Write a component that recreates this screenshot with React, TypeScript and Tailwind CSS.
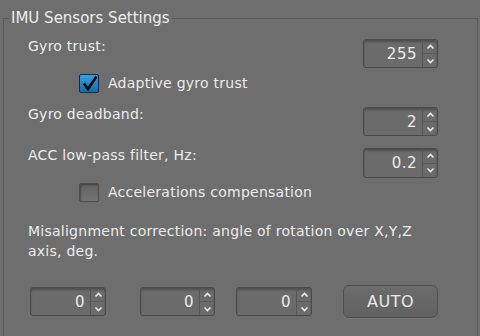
import React from "react";

const Spinner = ({ value, className = "" }: { value: string; className?: string }) => (
  <div
    className={`flex h-[29px] rounded-[3px] border border-[#4a4a4a] bg-[#6b6b6b] shadow-[inset_0_2px_2px_rgba(0,0,0,0.25)] ${className}`}
  >
    <div className="flex flex-1 items-center justify-end pr-[5px] text-[15px] tracking-[0.5px] text-[#ececec]">{value}</div>
    <div className="flex w-[15px] flex-col border-l border-[#555]">
      <div className="flex flex-1 items-center justify-center border-b border-[#5a5a5a]">
        <svg width="9" height="6" viewBox="0 0 9 6">
          <path d="M1.5 4.5 L4.5 1.5 L7.5 4.5" fill="none" stroke="#ededed" strokeWidth="1.6" />
        </svg>
      </div>
      <div className="flex flex-1 items-center justify-center">
        <svg width="9" height="6" viewBox="0 0 9 6">
          <path d="M1.5 1.5 L4.5 4.5 L7.5 1.5" fill="none" stroke="#ededed" strokeWidth="1.6" />
        </svg>
      </div>
    </div>
  </div>
);

const Checkbox = ({ checked }: { checked: boolean }) =>
  checked ? (
    <div className="relative h-[19px] w-[20px] rounded-[2px] border border-[#0b3048] bg-gradient-to-b from-[#3aa0e0] to-[#136aa8]">
      <svg className="absolute left-[2px] top-[0px]" width="16" height="17" viewBox="0 0 16 17">
        <path d="M2 8.5 L6 14 L14.5 1.5" fill="none" stroke="#050505" strokeWidth="2.6" />
      </svg>
    </div>
  ) : (
    <div className="h-[19px] w-[20px] rounded-[2px] border border-[#4c4c4c] bg-gradient-to-b from-[#626262] to-[#747474] shadow-[inset_1px_1px_2px_rgba(0,0,0,0.35)]" />
  );

export default function App() {
  return (
    <div
      className="h-[336px] w-[480px] overflow-hidden bg-[#6e6e6e] text-[14px] leading-[16px] tracking-[0.25px] text-[#ececec]"
      style={{ fontFamily: '"DejaVu Sans", "Liberation Sans", sans-serif' }}
    >
      <fieldset className="ml-[3px] mt-[8px] h-[340px] w-[472px] border border-[#5a5a5a]">
        <legend className="ml-[5px] px-[2px] text-[15px] leading-[20px] tracking-normal text-[#ececec]">
          IMU Sensors Settings
        </legend>
        <div className="pl-[24px] pr-[39px]">
          <div className="mt-[11px] flex h-[29px] items-start justify-between">
            <span className="mt-[-1px]">Gyro trust:</span>
            <Spinner value="255" className="w-[75px]" />
          </div>
          <div className="ml-[51px] mt-[5px] flex h-[20px] items-center gap-[9px]">
            <Checkbox checked />
            <span>Adaptive gyro trust</span>
          </div>
          <div className="mt-[14px] flex h-[29px] items-start justify-between">
            <span className="mt-[-1px]">Gyro deadband:</span>
            <Spinner value="2" className="w-[75px]" />
          </div>
          <div className="mt-[12px] flex h-[30px] items-start justify-between">
            <span className="mt-[-1px]">ACC low-pass filter, Hz:</span>
            <Spinner value="0.2" className="h-[30px] w-[75px]" />
          </div>
          <div className="ml-[51px] mt-[4px] flex h-[20px] items-center gap-[9px]">
            <Checkbox checked={false} />
            <span>Accelerations compensation</span>
          </div>
          <div className="mt-[19px] leading-[20px]">
            Misalignment correction: angle of rotation over X,Y,Z
            <br />
            axis, deg.
          </div>
          <div className="ml-[2px] mt-[24px] flex items-center">
            <Spinner value="0" className="w-[76px]" />
            <Spinner value="0" className="ml-[34px] w-[75px]" />
            <Spinner value="0" className="ml-[21px] w-[76px]" />
            <button className="ml-[31px] h-[33px] w-[95px] rounded-[6px] border border-[#4e4e4e] bg-gradient-to-b from-[#6c6c6c] to-[#616161] text-[16px] tracking-[0.5px] text-[#e8e8e8] shadow-[0_1px_1px_rgba(255,255,255,0.08)]">
              AUTO
            </button>
          </div>
        </div>
      </fieldset>
    </div>
  );
}
